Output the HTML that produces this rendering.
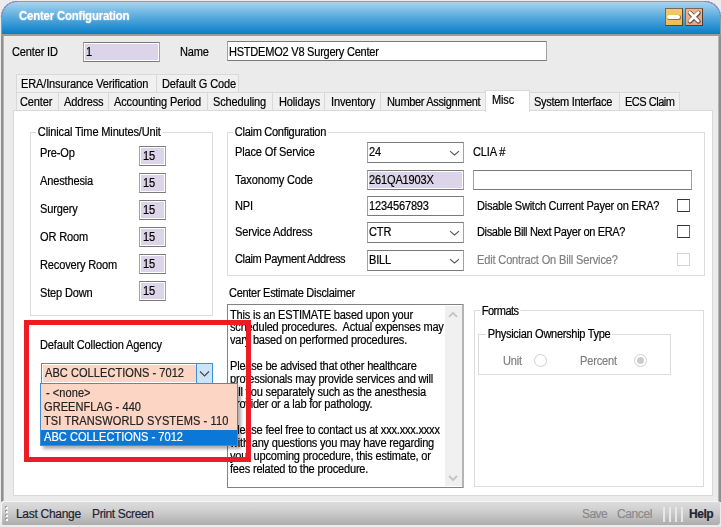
<!DOCTYPE html>
<html><head><meta charset="utf-8">
<style>
*{box-sizing:border-box;margin:0;padding:0}
html,body{width:721px;height:527px;overflow:hidden;background:#ebebeb}
body{position:relative;font-family:"Liberation Sans",sans-serif;font-size:11px;color:#000}
.a{position:absolute}
.t{position:absolute;white-space:nowrap;line-height:13px;font-size:12px;letter-spacing:-0.17px;transform:scaleX(0.92);transform-origin:0 0;-webkit-text-stroke-width:0.2px}
.frame{position:absolute;left:1px;top:34px;width:720px;height:468px;border-left:2px solid #8f8f8f;border-right:2px solid #8f8f8f;background:#ebebeb;box-shadow:inset 1px 0 0 #b4b4b4,inset -1px 0 0 #b4b4b4}
.title{position:absolute;left:1px;top:1px;width:720px;height:35px;border-radius:16px 16px 0 0;background:#9a9a9a}
.title .g{position:absolute;left:1px;top:1px;right:1px;height:32px;border-radius:15px 15px 0 0;background:linear-gradient(#a8d4ee,#53a8dd 50%,#0a7dc8)}
.tt{position:absolute;left:19px;top:9px;font-weight:bold;font-size:12px;letter-spacing:-0.2px;transform:scaleX(0.95);transform-origin:0 0;color:#fff;text-shadow:0 0 2px rgba(255,255,255,.7)}
.box{position:absolute;border:1px solid #7a7a7a;border-left-color:#a2a2a2;border-right-color:#a2a2a2;background:#fff}
.lav{background:#dcd4e8;box-shadow:inset 0 0 0 1px #fff}
.tab{position:absolute;border:1px solid #d9d9d9;background:#f0f0f0;height:19px}
.panel{position:absolute;left:13px;top:110px;width:700px;height:386px;border:1px solid #d9d9d9;background:#fff}
.gb{position:absolute;border:1px solid #dcdcdc}
.gbl{position:absolute;background:#fff;padding:0 2px;white-space:nowrap;line-height:13px;font-size:12px;letter-spacing:-0.17px;transform:scaleX(0.92);transform-origin:0 0;-webkit-text-stroke-width:0.2px}
.cb{position:absolute;width:13px;height:13px;border:1px solid #333;border-left-color:#6a6a6a;border-right-color:#6a6a6a}
.chev{position:absolute;width:11px;height:7px}
</style></head><body>
<div class="frame"></div>
<div class="title"><div class="g"></div></div>
<svg class="a" style="left:0;top:0" width="721" height="20" viewBox="0 0 721 20"><path d="M1.5 17 A15.5 15.5 0 0 1 17 1.5" fill="none" stroke="#7a74e6" stroke-width="1.2" stroke-dasharray="2 1.2" opacity=".85"/><path d="M704.5 1.5 A15.5 15.5 0 0 1 720.5 17" fill="none" stroke="#7a74e6" stroke-width="1.2" stroke-dasharray="2 1.2" opacity=".85"/></svg>
<div class="tt">Center Configuration</div>
<!-- window buttons -->
<div class="a" style="left:665px;top:8px;width:18px;height:18px;background:linear-gradient(#f4c86a,#efbc56);border:1px solid #7a6a55;border-right-color:#4e4236;border-bottom-color:#4e4236"></div>
<div class="a" style="left:666.5px;top:14.5px;width:14px;height:5px;background:#6a5a40;opacity:.75;border-radius:2px;filter:blur(.4px)"></div>
<div class="a" style="left:667px;top:15px;width:13px;height:4px;background:#fff;border-radius:2px"></div>
<div class="a" style="left:685px;top:8px;width:18px;height:18px;background:linear-gradient(#f2b38a,#eaa479);border:1px solid #7a6558;border-right-color:#4e4038;border-bottom-color:#4e4038"></div>
<svg class="a" style="left:685px;top:8px" width="18" height="18" viewBox="0 0 18 18"><path d="M4.8 4.6 L13.2 13 M13.2 4.6 L4.8 13" stroke="#4a4a4a" stroke-width="4.6" stroke-linecap="round" transform="translate(0.3,0.4)" opacity=".85"/><path d="M4.8 4.6 L13.2 13 M13.2 4.6 L4.8 13" stroke="#fff" stroke-width="2.8" stroke-linecap="round"/></svg>
<!-- header -->
<div class="t" style="left:12px;top:46px">Center ID</div>
<div class="box lav" style="left:83px;top:42px;width:77px;height:20px"></div>
<div class="t" style="left:86px;top:46px">1</div>
<div class="t" style="left:180px;top:46px">Name</div>
<div class="box" style="left:227px;top:41px;width:320px;height:20px"></div>
<div class="t" style="left:229px;top:46px;letter-spacing:-0.26px">HSTDEMO2 V8 Surgery Center</div>

<!-- tabs -->
<div class="tab" style="left:16px;top:74px;width:141px"></div>
<div class="tab" style="left:156px;top:74px;width:83px"></div>
<div class="t" style="left:21px;top:78px">ERA/Insurance Verification</div>
<div class="t" style="left:162px;top:78px">Default G Code</div>

<div class="tab" style="left:16px;top:92px;width:43px"></div>
<div class="tab" style="left:58px;top:92px;width:51px"></div>
<div class="tab" style="left:108px;top:92px;width:100px"></div>
<div class="tab" style="left:207px;top:92px;width:66px"></div>
<div class="tab" style="left:272px;top:92px;width:53px"></div>
<div class="tab" style="left:324px;top:92px;width:57px"></div>
<div class="tab" style="left:380px;top:92px;width:106px"></div>
<div class="tab" style="left:529px;top:92px;width:91px"></div>
<div class="tab" style="left:619px;top:92px;width:61px"></div>
<div class="t" style="left:20px;top:96px">Center</div>
<div class="t" style="left:64px;top:96px">Address</div>
<div class="t" style="left:114px;top:96px">Accounting Period</div>
<div class="t" style="left:213px;top:96px">Scheduling</div>
<div class="t" style="left:279px;top:96px">Holidays</div>
<div class="t" style="left:331px;top:96px">Inventory</div>
<div class="t" style="left:387px;top:96px;letter-spacing:-0.39px">Number Assignment</div>
<div class="t" style="left:534px;top:96px;letter-spacing:-0.33px">System Interface</div>
<div class="t" style="left:625px;top:96px;letter-spacing:-0.55px">ECS Claim</div>

<div class="panel"></div>
<div class="a" style="left:485px;top:90px;width:45px;height:22px;border:1px solid #d9d9d9;border-bottom:none;background:#fff"></div>
<div class="t" style="left:492px;top:94px">Misc</div>

<!-- clinical time -->
<div class="gb" style="left:30px;top:132px;width:183px;height:184px"></div>
<div class="gbl" style="left:36px;top:126px">Clinical Time Minutes/Unit</div>
<div class="t" style="left:40px;top:147px">Pre-Op</div>
<div class="t" style="left:40px;top:175px">Anesthesia</div>
<div class="t" style="left:40px;top:203px">Surgery</div>
<div class="t" style="left:40px;top:231px">OR Room</div>
<div class="t" style="left:40px;top:259px">Recovery Room</div>
<div class="t" style="left:40px;top:287px">Step Down</div>
<div class="box lav" style="left:139px;top:146px;width:27px;height:20px"></div>
<div class="box lav" style="left:139px;top:173px;width:27px;height:20px"></div>
<div class="box lav" style="left:139px;top:200px;width:27px;height:20px"></div>
<div class="box lav" style="left:139px;top:227px;width:27px;height:20px"></div>
<div class="box lav" style="left:139px;top:254px;width:27px;height:20px"></div>
<div class="box lav" style="left:139px;top:281px;width:27px;height:20px"></div>
<div class="t" style="left:143px;top:150px">15</div>
<div class="t" style="left:143px;top:177px">15</div>
<div class="t" style="left:143px;top:204px">15</div>
<div class="t" style="left:143px;top:231px">15</div>
<div class="t" style="left:143px;top:258px">15</div>
<div class="t" style="left:143px;top:285px">15</div>

<!-- claim configuration -->
<div class="gb" style="left:227px;top:132px;width:478px;height:144px"></div>
<div class="gbl" style="left:233px;top:126px;letter-spacing:-0.33px">Claim Configuration</div>
<div class="t" style="left:235px;top:146px">Place Of Service</div>
<div class="t" style="left:235px;top:174px">Taxonomy Code</div>
<div class="t" style="left:235px;top:200px">NPI</div>
<div class="t" style="left:235px;top:226px">Service Address</div>
<div class="t" style="left:235px;top:253px;letter-spacing:-0.39px">Claim Payment Address</div>

<div class="box" style="left:367px;top:142px;width:97px;height:21px"></div>
<div class="t" style="left:369px;top:146px">24</div>
<div class="box lav" style="left:367px;top:170px;width:97px;height:20px;box-shadow:inset 0 0 0 1px #fff"></div>
<div class="t" style="left:369px;top:174px">261QA1903X</div>
<div class="box" style="left:367px;top:196px;width:97px;height:20px"></div>
<div class="t" style="left:369px;top:200px">1234567893</div>
<div class="box" style="left:367px;top:222px;width:97px;height:21px"></div>
<div class="t" style="left:369px;top:226px">CTR</div>
<div class="box" style="left:367px;top:250px;width:97px;height:21px"></div>
<div class="t" style="left:369px;top:254px">BILL</div>
<svg class="chev" style="left:449px;top:149px" viewBox="0 0 11 7"><path d="M1 2.2 L5.5 6 L10 2.2" fill="none" stroke="#555" stroke-width="1.1"/></svg>
<svg class="chev" style="left:449px;top:229px" viewBox="0 0 11 7"><path d="M1 2.2 L5.5 6 L10 2.2" fill="none" stroke="#555" stroke-width="1.1"/></svg>
<svg class="chev" style="left:449px;top:257px" viewBox="0 0 11 7"><path d="M1 2.2 L5.5 6 L10 2.2" fill="none" stroke="#555" stroke-width="1.1"/></svg>

<div class="t" style="left:473px;top:146px">CLIA #</div>
<div class="box" style="left:473px;top:170px;width:219px;height:20px"></div>
<div class="t" style="left:477px;top:200px;letter-spacing:-0.28px">Disable Switch Current Payer on ERA?</div>
<div class="t" style="left:477px;top:226px;letter-spacing:-0.4px">Disable Bill Next Payer on ERA?</div>
<div class="t" style="left:477px;top:254px;color:#808080">Edit Contract On Bill Service?</div>
<div class="cb" style="left:677px;top:199px"></div>
<div class="cb" style="left:677px;top:225px"></div>
<div class="cb" style="left:677px;top:253px;border-color:#d4d4d4"></div>

<!-- disclaimer -->
<div class="t" style="left:229px;top:287px;letter-spacing:-0.33px">Center Estimate Disclaimer</div>
<div class="box" style="left:227px;top:304px;width:237px;height:184px;border-color:#828282;border-right:2px solid #b4b4b4"></div>
<div class="a" style="left:445px;top:306px;width:17px;height:180px;background:#f0f0f0"></div>
<svg class="a" style="left:448px;top:311px" width="10" height="7" viewBox="0 0 10 7"><path d="M1 5.8 L5 1.8 L9 5.8" fill="none" stroke="#c4c4c4" stroke-width="1.9"/></svg>
<svg class="a" style="left:448px;top:474px" width="10" height="8" viewBox="0 0 10 8"><path d="M1 2 L5 6 L9 2" fill="none" stroke="#c4c4c4" stroke-width="1.9"/></svg>
<div class="a" style="left:230px;top:308.5px;line-height:12.85px;white-space:pre;font-size:12px;letter-spacing:-0.22px;transform:scaleX(0.92);transform-origin:0 0;-webkit-text-stroke-width:0.2px">This is an ESTIMATE based upon your
scheduled procedures.  Actual expenses may
vary based on performed procedures.

Please be advised that other healthcare
professionals may provide services and will
bill you separately such as the anesthesia
provider or a lab for pathology.

Please feel free to contact us at xxx.xxx.xxxx
with any questions you may have regarding
your upcoming procedure, this estimate, or
fees related to the procedure.</div>

<!-- formats -->
<div class="gb" style="left:474px;top:310px;width:230px;height:177px"></div>
<div class="gbl" style="left:480px;top:305px;letter-spacing:-0.60px">Formats</div>
<div class="gb" style="left:478px;top:334px;width:193px;height:41px"></div>
<div class="gbl" style="left:486px;top:328px;letter-spacing:-0.33px">Physician Ownership Type</div>
<div class="t" style="left:503px;top:355px;color:#808080">Unit</div>
<div class="t" style="left:580px;top:355px;color:#808080">Percent</div>
<div class="a" style="left:534px;top:354px;width:13px;height:13px;border-radius:50%;border:1px solid #cfcfcf"></div>
<div class="a" style="left:634px;top:354px;width:13px;height:13px;border-radius:50%;border:1px solid #cfcfcf"></div>
<div class="a" style="left:637px;top:357px;width:7px;height:7px;border-radius:50%;background:#cccccc"></div>

<!-- collection agency -->
<div class="t" style="left:40px;top:339px">Default Collection Agency</div>
<div class="a" style="left:41px;top:363px;width:172px;height:21px;border:1px solid #3c8fd8;background:#fcd5c5;box-shadow:inset 0 0 0 1px #fff"></div>
<div class="a" style="left:196px;top:363px;width:17px;height:21px;border:1px solid #3c8fd8;background:#cce4f7"></div>
<svg class="chev" style="left:199px;top:370px" viewBox="0 0 11 7"><path d="M1 1.5 L5.5 6 L10 1.5" fill="none" stroke="#444" stroke-width="1.1"/></svg>
<div class="t" style="left:45px;top:367px;letter-spacing:0.05px;color:#222">ABC COLLECTIONS - 7012</div>
<div class="a" style="left:40px;top:383px;width:198px;height:63px;border:1px solid #3c8fd8;background:#fcd5c5;box-shadow:3px 3px 3px rgba(0,0,0,.32)"></div>
<div class="a" style="left:41px;top:430px;width:196px;height:15px;background:#0b78d7"></div>
<div class="t" style="left:46px;top:387px;letter-spacing:0.05px;color:#222">- &lt;none&gt;</div>
<div class="t" style="left:44px;top:401px;letter-spacing:0.05px;color:#222">GREENFLAG - 440</div>
<div class="t" style="left:44px;top:415px;letter-spacing:0.10px;color:#222">TSI TRANSWORLD SYSTEMS - 110</div>
<div class="t" style="left:44px;top:431px;letter-spacing:0.05px;color:#fff">ABC COLLECTIONS - 7012</div>

<!-- red rect -->
<div class="a" style="left:24px;top:320px;width:227px;height:142px;border:5px solid #ed1c24"></div>

<!-- toolbar -->
<div class="a" style="left:1px;top:501px;width:719px;height:24px;border-radius:3px;background:linear-gradient(#dedede,#cdcdcd 45%,#acacac);box-shadow:inset 1px 1px 0 #f4f4f4"></div>
<div class="a" style="left:5px;top:506px;width:2px;height:2px;background:#9c9c9c"></div><div class="a" style="left:6px;top:507px;width:2px;height:2px;background:#fafafa"></div>
<div class="a" style="left:5px;top:510px;width:2px;height:2px;background:#9c9c9c"></div><div class="a" style="left:6px;top:511px;width:2px;height:2px;background:#fafafa"></div>
<div class="a" style="left:5px;top:514px;width:2px;height:2px;background:#9c9c9c"></div><div class="a" style="left:6px;top:515px;width:2px;height:2px;background:#fafafa"></div>
<div class="a" style="left:5px;top:518px;width:2px;height:2px;background:#9c9c9c"></div><div class="a" style="left:6px;top:519px;width:2px;height:2px;background:#fafafa"></div>
<div class="t" style="left:16px;top:507.5px;font-size:12px;transform:none;letter-spacing:-0.3px;color:#1f2533">Last Change</div>
<div class="t" style="left:92px;top:507.5px;font-size:12px;transform:none;letter-spacing:-0.37px;color:#1f2533">Print Screen</div>
<div class="t" style="left:582px;top:507.5px;font-size:12px;transform:none;letter-spacing:-0.6px;color:#8a8a8a">Save</div>
<div class="t" style="left:617px;top:507.5px;font-size:12px;transform:none;letter-spacing:-0.38px;color:#8a8a8a">Cancel</div>
<div class="t" style="left:689px;top:507.5px;font-size:12px;transform:none;letter-spacing:-0.45px;font-weight:bold;color:#1f2533">Help</div>
<div class="a" style="left:663px;top:507px;width:2px;height:15px;background:#e8e8e8"></div>
<div class="a" style="left:669px;top:507px;width:2px;height:15px;background:#e8e8e8"></div>
<div class="a" style="left:675px;top:507px;width:2px;height:15px;background:#e8e8e8"></div>
<div class="a" style="left:681px;top:507px;width:2px;height:15px;background:#e8e8e8"></div>
</body></html>
